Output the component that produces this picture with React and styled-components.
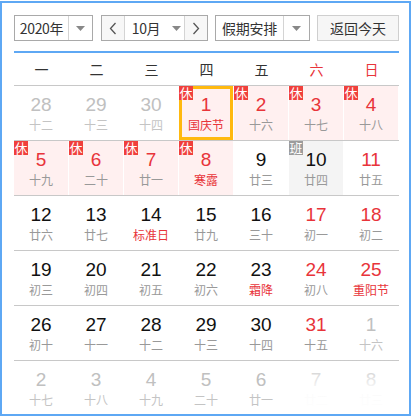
import React from 'react';
import styled, { createGlobalStyle } from 'styled-components';

const GlobalStyle = createGlobalStyle`
  html, body {
    margin: 0;
    padding: 0;
    background: #fff;
  }
  body {
    font-family: "Liberation Sans", "Noto Sans CJK SC", sans-serif;
  }
`;

const WEEKDAYS = [
  { label: '一' },
  { label: '二' },
  { label: '三' },
  { label: '四' },
  { label: '五' },
  { label: '六', red: true },
  { label: '日', red: true },
];

// other: day from another month, rest: 休, work: 班, fest: festival name in red
const DAYS = [
  { d: 28, l: '十二', other: true },
  { d: 29, l: '十三', other: true },
  { d: 30, l: '十四', other: true },
  { d: 1, l: '国庆节', fest: true, rest: true, red: true, today: true },
  { d: 2, l: '十六', rest: true, red: true },
  { d: 3, l: '十七', rest: true, red: true },
  { d: 4, l: '十八', rest: true, red: true },

  { d: 5, l: '十九', rest: true, red: true },
  { d: 6, l: '二十', rest: true, red: true },
  { d: 7, l: '廿一', rest: true, red: true },
  { d: 8, l: '寒露', fest: true, rest: true, red: true },
  { d: 9, l: '廿三' },
  { d: 10, l: '廿四', work: true },
  { d: 11, l: '廿五', red: true },

  { d: 12, l: '廿六' },
  { d: 13, l: '廿七' },
  { d: 14, l: '标准日', fest: true },
  { d: 15, l: '廿九' },
  { d: 16, l: '三十' },
  { d: 17, l: '初一', red: true },
  { d: 18, l: '初二', red: true },

  { d: 19, l: '初三' },
  { d: 20, l: '初四' },
  { d: 21, l: '初五' },
  { d: 22, l: '初六' },
  { d: 23, l: '霜降', fest: true },
  { d: 24, l: '初八', red: true },
  { d: 25, l: '重阳节', fest: true, red: true },

  { d: 26, l: '初十' },
  { d: 27, l: '十一' },
  { d: 28, l: '十二' },
  { d: 29, l: '十三' },
  { d: 30, l: '十四' },
  { d: 31, l: '十五', red: true },
  { d: 1, l: '十六', other: true },

  { d: 2, l: '十七', other: true },
  { d: 3, l: '十八', other: true },
  { d: 4, l: '十九', other: true },
  { d: 5, l: '二十', other: true },
  { d: 6, l: '廿一', other: true },
  { d: 7, l: '廿二', other: true },
  { d: 8, l: '廿三', other: true },
];

function Caret() {
  return (
    <svg width="9" height="5" viewBox="0 0 9 5">
      <path d="M0 0 H9 L4.5 5 Z" fill="#888" />
    </svg>
  );
}

function Chevron({ dir }) {
  return (
    <svg width="8" height="13" viewBox="0 0 8 13">
      <path
        d={dir === 'left' ? 'M6.5 1 L1.5 6.5 L6.5 12' : 'M1.5 1 L6.5 6.5 L1.5 12'}
        fill="none"
        stroke="#555"
        strokeWidth="1.3"
      />
    </svg>
  );
}

export default function App() {
  const rows = [];
  for (let i = 0; i < DAYS.length; i += 7) rows.push(DAYS.slice(i, i + 7));

  return (
    <>
      <GlobalStyle />
      <Frame>
        <Toolbar>
          <Select $w={79} $arrow={23}>
            <SelectText>2020年</SelectText>
            <SelectArrow><Caret /></SelectArrow>
          </Select>
          <MonthGroup>
            <NavButton><Chevron dir="left" /></NavButton>
            <MonthSelect>
              <span>10月</span>
              <Caret />
            </MonthSelect>
            <NavButton><Chevron dir="right" /></NavButton>
          </MonthGroup>
          <Select $w={95} $arrow={25}>
            <SelectText>假期安排</SelectText>
            <SelectArrow><Caret /></SelectArrow>
          </Select>
          <TodayButton>返回今天</TodayButton>
        </Toolbar>

        <WeekHeader>
          {WEEKDAYS.map((w) => (
            <WeekDay key={w.label} $red={w.red}>{w.label}</WeekDay>
          ))}
        </WeekHeader>

        <Grid>
          {rows.map((row, ri) => (
            <Row key={ri}>
              {row.map((c, ci) => (
                <Cell key={ci} $rest={c.rest} $work={c.work} $today={c.today}>
                  {c.rest && <Badge>休</Badge>}
                  {c.work && <Badge $gray>班</Badge>}
                  <DayNum $red={c.red} $other={c.other}>{c.d}</DayNum>
                  <Lunar $fest={c.fest} $other={c.other}>{c.l}</Lunar>
                </Cell>
              ))}
            </Row>
          ))}
        </Grid>
        <Fade />
      </Frame>
    </>
  );
}

const Frame = styled.div`
  position: relative;
  box-sizing: border-box;
  width: 411px;
  height: 415px;
  margin-top: 1px;
  border: 2px solid #5ea8f4;
  padding: 12px 10px 0 12px;
  overflow: hidden;
`;

const Toolbar = styled.div`
  display: flex;
  gap: 8px;
  width: 385px;
  height: 26px;
  padding-bottom: 10px;
  border-bottom: 2px solid #5ea8f4;
  font-size: 14px;
  color: #333;
`;

const Select = styled.div`
  box-sizing: border-box;
  display: flex;
  width: ${(p) => p.$w}px;
  height: 26px;
  border: 1px solid #a9a9a9;
  background: #fff;
  & > :last-child {
    width: ${(p) => p.$arrow}px;
  }
`;

const SelectText = styled.div`
  flex: 1;
  display: flex;
  align-items: center;
  justify-content: center;
  border-right: 1px solid #d4d4d4;
  font-family: "Noto Sans CJK SC", "Liberation Sans", sans-serif;
  font-size: 14px;
  letter-spacing: -0.3px;
`;

const SelectArrow = styled.div`
  display: flex;
  align-items: center;
  justify-content: center;
`;

const MonthGroup = styled.div`
  box-sizing: border-box;
  display: flex;
  width: 107px;
  height: 26px;
  border: 1px solid #a9a9a9;
  margin-right: -1px;
`;

const NavButton = styled.div`
  width: 22px;
  display: flex;
  align-items: center;
  justify-content: center;
  background: #f7f7f7;
`;

const MonthSelect = styled.div`
  flex: 1;
  display: flex;
  align-items: center;
  justify-content: center;
  gap: 12px;
  padding-left: 4px;
  border-left: 1px solid #d4d4d4;
  border-right: 1px solid #d4d4d4;
  background: #fff;
  font-family: "Noto Sans CJK SC", "Liberation Sans", sans-serif;
  letter-spacing: -0.3px;
`;

const TodayButton = styled.div`
  box-sizing: border-box;
  width: 82px;
  height: 26px;
  margin-left: -1px;
  display: flex;
  align-items: center;
  justify-content: center;
  border: 1px solid #cfcfcf;
  background: #f6f6f6;
  font-family: "Noto Sans CJK SC", "Liberation Sans", sans-serif;
  font-size: 14px;
`;

const WeekHeader = styled.div`
  display: grid;
  grid-template-columns: repeat(7, 55px);
  height: 32px;
  border-bottom: 1px solid #c8c8c8;
`;

const WeekDay = styled.div`
  display: flex;
  align-items: center;
  justify-content: center;
  font-family: "Noto Sans CJK SC", sans-serif;
  font-size: 14px;
  color: ${(p) => (p.$red ? '#e8343a' : '#333')};
`;

const Grid = styled.div`
  display: flex;
  flex-direction: column;
  width: 385px;
`;

const Row = styled.div`
  display: grid;
  grid-template-columns: repeat(7, 55px);
  height: 54px;
  border-bottom: 1px solid #c8c8c8;
`;

const Cell = styled.div`
  position: relative;
  box-sizing: border-box;
  display: flex;
  flex-direction: column;
  align-items: center;
  padding-top: 8px;
  border-right: 1px solid #fff;
  background: ${(p) => (p.$rest ? '#fff0f0' : p.$work ? '#f4f4f4' : '#fff')};
  box-shadow: ${(p) => (p.$today ? 'inset 0 0 0 3px #ffb90f' : 'none')};
`;

const Badge = styled.span`
  position: absolute;
  left: 0;
  top: 0;
  width: 14px;
  height: 14px;
  display: flex;
  align-items: center;
  justify-content: center;
  background: ${(p) => (p.$gray ? '#9c9c9c' : '#f0403c')};
  color: #fff;
  font-family: "Noto Sans CJK SC", sans-serif;
  font-size: 13px;
  line-height: 14px;
`;

const DayNum = styled.div`
  height: 22px;
  line-height: 22px;
  font-size: 19px;
  color: ${(p) => (p.$other ? '#c0c0c0' : p.$red ? '#e8343a' : '#111')};
`;

const Lunar = styled.div`
  height: 16px;
  line-height: 16px;
  margin-top: 1px;
  font-family: "Noto Sans CJK SC", sans-serif;
  font-size: 12px;
  color: ${(p) => (p.$other ? '#c4c4c4' : p.$fest ? '#e8343a' : '#999')};
`;

const Fade = styled.div`
  position: absolute;
  right: 0;
  bottom: 0;
  width: 124px;
  height: 54px;
  background: linear-gradient(to bottom, rgba(255, 255, 255, 0) 0%, rgba(255, 255, 255, 0.92) 55%, #fff 100%);
  pointer-events: none;
`;
